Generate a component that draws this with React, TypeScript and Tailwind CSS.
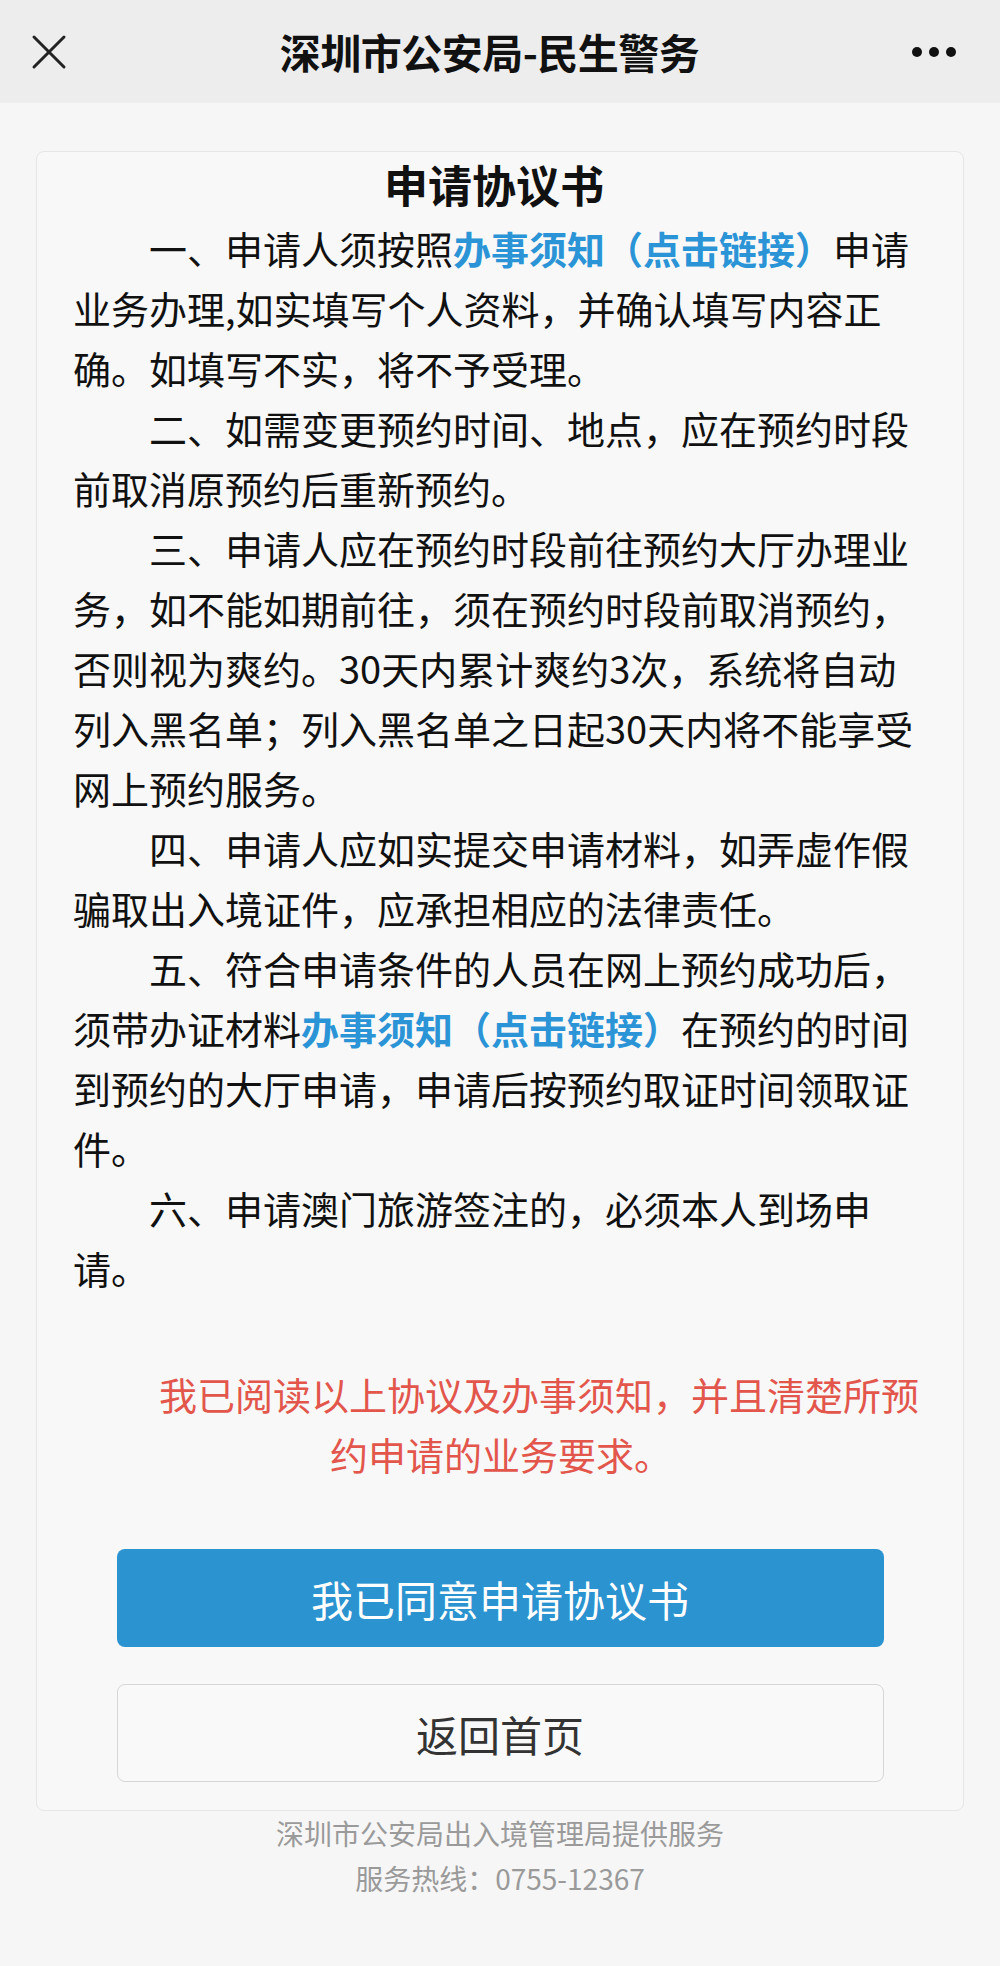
import React from "react";

const font = { fontFamily: '"Noto Sans CJK SC", "Noto Sans", sans-serif' };

function Link() {
  return <span className="font-bold text-[#2b94d6]">办事须知（点击链接）</span>;
}

export default function App() {
  const p = "indent-[2em]";
  return (
    <div className="min-h-[1966px] w-[1000px] bg-[#f6f6f6] text-[#111]" style={font}>
      <header className="flex h-[103px] items-center justify-between bg-[#ededed] px-[30px]">
        <svg width="36" height="36" viewBox="0 0 36 36" className="ml-[1px]">
          <path d="M3 3 L33 33 M33 3 L3 33" stroke="#222" strokeWidth="3" strokeLinecap="round" />
        </svg>
        <h1 className="text-[41px] font-semibold tracking-[-0.5px] text-[#111]">深圳市公安局-民生警务</h1>
        <div className="mr-[14px] flex gap-[7px]">
          <span className="h-[10px] w-[10px] rounded-full bg-[#111]" />
          <span className="h-[10px] w-[10px] rounded-full bg-[#111]" />
          <span className="h-[10px] w-[10px] rounded-full bg-[#111]" />
        </div>
      </header>
      <main className="px-[36px] pt-[48px]">
        <div className="rounded-[8px] border border-[#e6e6e6] bg-[#f8f8f8] pb-[28px] pl-[36px] pr-[48px] pt-[2px]">
          <h2 className="mb-[4px] text-center text-[44px] font-bold leading-[60px]">申请协议书</h2>
          <div className="text-[38px] leading-[60px] text-[#111]">
            <p className={p}>一、申请人须按照<Link />申请业务办理,如实填写个人资料，并确认填写内容正确。如填写不实，将不予受理。</p>
            <p className={p}>二、如需变更预约时间、地点，应在预约时段前取消原预约后重新预约。</p>
            <p className={p}>三、申请人应在预约时段前往预约大厅办理业务，如不能如期前往，须在预约时段前取消预约，否则视为爽约。30天内累计爽约3次，系统将自动列入黑名单；列入黑名单之日起30天内将不能享受网上预约服务。</p>
            <p className={p}>四、申请人应如实提交申请材料，如弄虚作假骗取出入境证件，应承担相应的法律责任。</p>
            <p className={p}>五、符合申请条件的人员在网上预约成功后，须带办证材料<Link />在预约的时间到预约的大厅申请，申请后按预约取证时间领取证件。</p>
            <p className={p}>六、申请澳门旅游签注的，必须本人到场申请。</p>
          </div>
          <p className="-ml-[3px] -mr-[17px] mt-[66px] text-center indent-[2em] text-[38px] leading-[60px] text-[#e2564c]">
            我已阅读以上协议及办事须知，并且清楚所预约申请的业务要求。
          </p>
          <div className="mt-[65px] flex flex-col items-center gap-[37px] pl-[12px]">
            <button className="flex h-[98px] w-[767px] items-center justify-center rounded-[8px] bg-[#2a93d0] text-[42px] text-white">
              我已同意申请协议书
            </button>
            <button className="flex h-[98px] w-[767px] items-center justify-center rounded-[8px] border border-[#d6d6d6] bg-[#f9f9f9] text-[42px] text-[#333]">
              返回首页
            </button>
          </div>
        </div>
        <div className="text-center text-[28px] leading-[45px] text-[#9a9a9a]">
          <p>深圳市公安局出入境管理局提供服务</p>
          <p>服务热线：0755-12367</p>
        </div>
      </main>
    </div>
  );
}
